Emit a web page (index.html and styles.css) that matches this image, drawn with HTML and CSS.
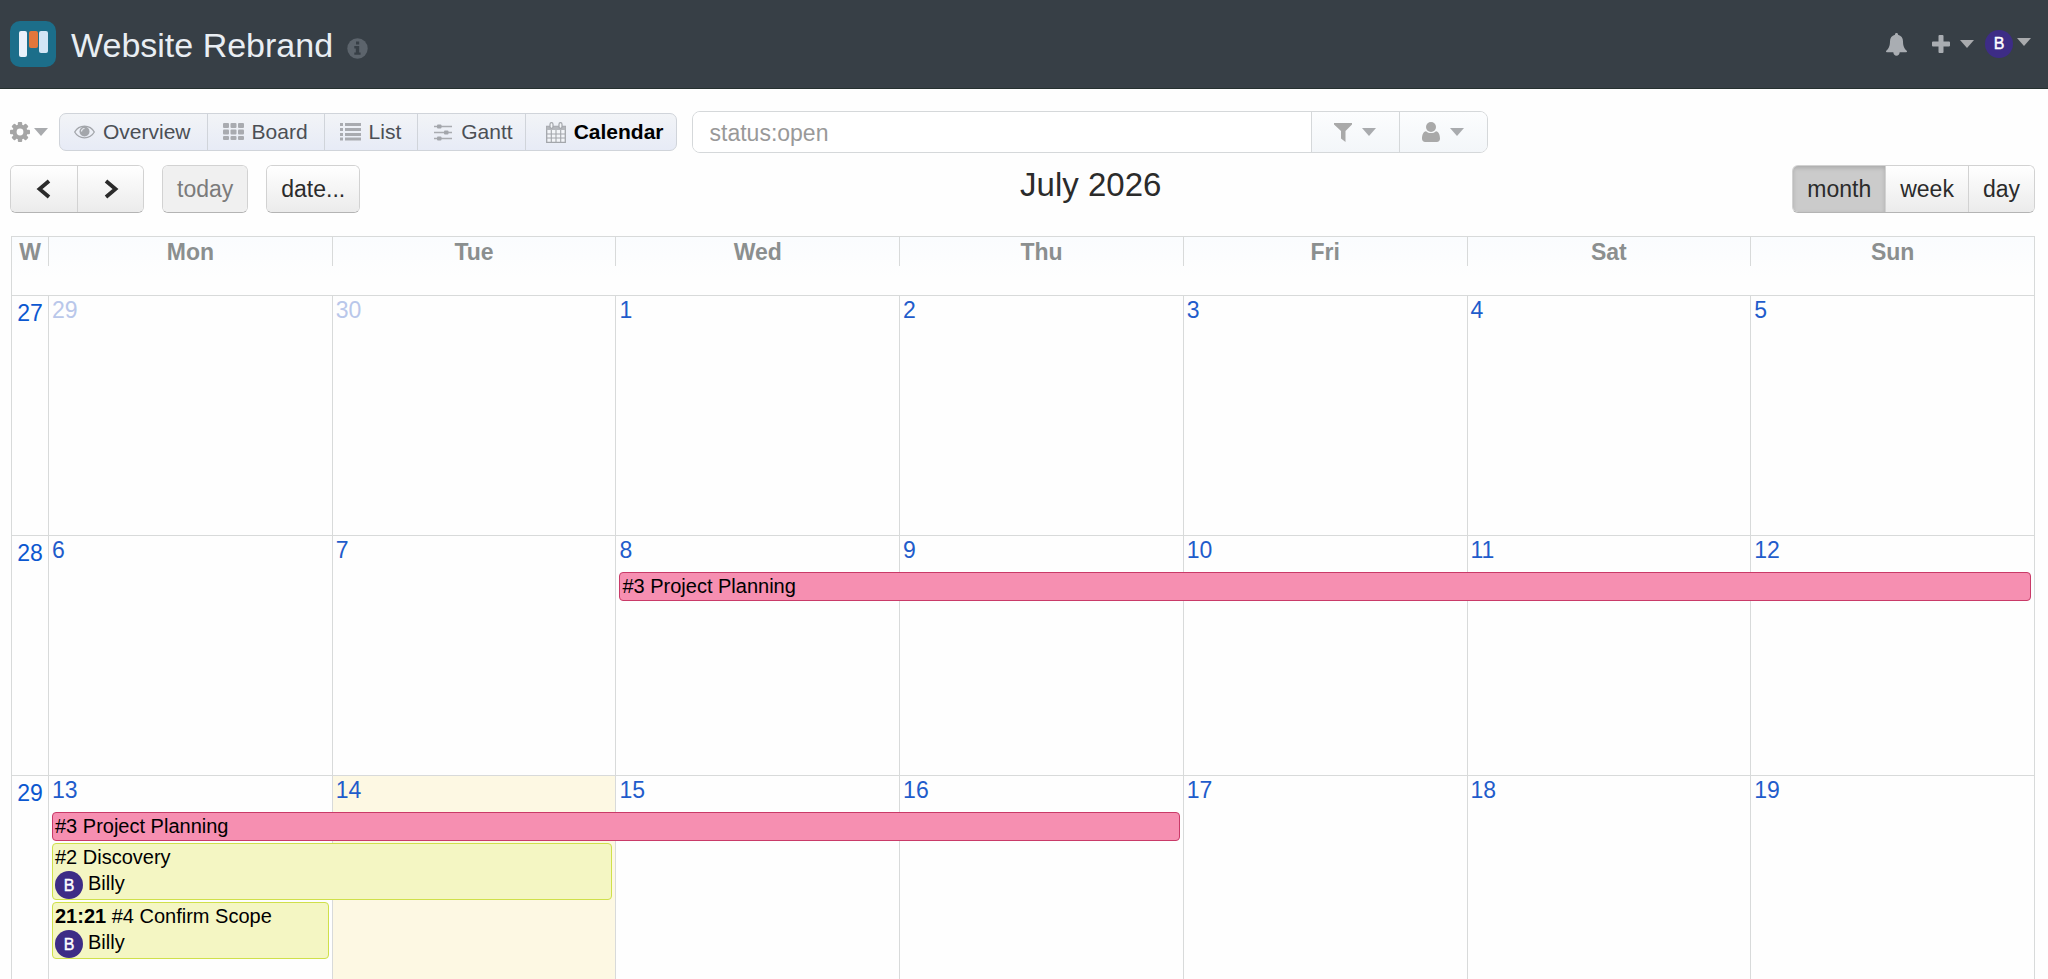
FILE: index.html
```html
<!DOCTYPE html>
<html lang="en">
<head>
<meta charset="utf-8">
<meta name="viewport" content="width=device-width, initial-scale=1">
<title>Website Rebrand - Calendar</title>
<link rel="stylesheet" href="styles.css">
</head>
<body>
<header class="topbar">
  <a class="logo" href="#" aria-label="Home">
    <svg width="46" height="46" viewBox="0 0 46 46" aria-hidden="true"><rect width="46" height="46" rx="10" fill="#1c6e8a"/><rect x="9" y="10" width="8" height="26" rx="2" fill="#e9f1fa"/><rect x="19" y="10" width="9" height="17" rx="2" fill="#e2763b"/><rect x="29" y="10" width="9" height="22" rx="2" fill="#d3e5f5"/></svg>
  </a>
  <h1 class="project">Website Rebrand</h1>
  <button class="plain info" aria-label="Project details">
    <svg width="21" height="21" viewBox="0 0 21 21" aria-hidden="true"><circle cx="10.500" cy="10.500" r="10.200" fill="#5c646c"/><path d="M9 3.500h3.200v3H9zM7.300 8h4.900v6.400h1.400v2.300H7.300v-2.300h1.500v-4H7.300z" fill="#373f46"/></svg>
  </button>
  <nav class="user-menu" aria-label="User">
    <button class="plain" aria-label="Notifications">
      <svg width="21" height="23" viewBox="0 0 21 23" aria-hidden="true"><path d="M10.500 0c.9 0 1.500.6 1.500 1.400v.4c3.200.8 5 3.300 5 6.400 0 5.300 1.600 7.500 3.700 9.500.6.600.3 1.500-.5 1.500h-6.500c-.2 2-1.400 3.500-3.200 3.500s-3-1.500-3.200-3.500H.8c-.8 0-1.100-.9-.5-1.500C2.400 15.700 4 13.500 4 8.200c0-3.100 1.800-5.600 5-6.400v-.4C9 .6 9.600 0 10.500 0z" fill="#a9adb2"/></svg>
    </button>
    <button class="plain add" aria-label="Add">
      <svg width="18" height="18" viewBox="0 0 18 18" aria-hidden="true"><path d="M6.500 1q0-1 1-1h3q1 0 1 1v5.500H17q1 0 1 1v3q0 1-1 1h-5.500V17q0 1-1 1h-3q-1 0-1-1v-5.500H1q-1 0-1-1v-3q0-1 1-1h5.500z" fill="#a9adb2"/></svg>
      <span class="caret"></span>
    </button>
    <button class="plain account" aria-label="Account">
      <span class="avatar">B</span>
      <span class="caret"></span>
    </button>
  </nav>
</header>

<main>
  <div class="views">
    <button class="plain settings" aria-label="Settings">
      <svg width="20" height="20" viewBox="0 0 20 20" aria-hidden="true"><g fill="#a6a6a6"><rect x="7.800" y="0" width="4.400" height="20" rx="1"/><rect x="7.800" y="0" width="4.400" height="20" rx="1" transform="rotate(45 10 10)"/><rect x="7.800" y="0" width="4.400" height="20" rx="1" transform="rotate(90 10 10)"/><rect x="7.800" y="0" width="4.400" height="20" rx="1" transform="rotate(135 10 10)"/><circle cx="10" cy="10" r="7.500"/></g><circle cx="10" cy="10" r="3.400" fill="#fefefe"/></svg>
      <span class="caret"></span>
    </button>
    <nav class="tabs" aria-label="Views">
      <a class="tab" href="#"><svg width="21" height="20" viewBox="0 0 21 20" aria-hidden="true"><path d="M.7 10C5 2.300 16 2.300 20.300 10 16 17.700 5 17.700.7 10z" fill="none" stroke="#a3a6ab" stroke-width="1.300"/><circle cx="10.500" cy="9.500" r="5" fill="#a3a6ab"/><path d="M7.500 9.500a3 3 0 0 1 3-3" fill="none" stroke="#eef1f6" stroke-width="1.200"/></svg>Overview</a>
      <a class="tab" href="#"><svg width="21" height="20" viewBox="0 0 21 20" aria-hidden="true"><g fill="#a9abb0"><rect x="0" y="1" width="6" height="5" rx="1"/><rect x="7.500" y="1" width="6" height="5" rx="1"/><rect x="15" y="1" width="6" height="5" rx="1"/><rect x="0" y="7.500" width="6" height="5" rx="1"/><rect x="7.500" y="7.500" width="6" height="5" rx="1"/><rect x="15" y="7.500" width="6" height="5" rx="1"/><rect x="0" y="14" width="6" height="4" rx="1"/><rect x="7.500" y="14" width="6" height="4" rx="1"/><rect x="15" y="14" width="6" height="4" rx="1"/></g></svg>Board</a>
      <a class="tab" href="#"><svg width="21" height="20" viewBox="0 0 21 20" aria-hidden="true"><path d="M0 2.500h3M5 2.500h16M0 7.500h3M5 7.500h16M0 12.500h3M5 12.500h16M0 17h3M5 17h16" stroke="#a9abb0" stroke-width="2.900" fill="none"/></svg>List</a>
      <a class="tab tab-tight" href="#"><svg width="20" height="20" viewBox="0 0 20 20" aria-hidden="true"><path d="M1 4.500h18M1 10.500h18M1 16.500h18" stroke="#a9abb0" stroke-width="1.500"/><g fill="#a3a6ab"><rect x="4" y="2.500" width="4.500" height="4" rx="1"/><rect x="11" y="8.500" width="4.500" height="4" rx="1"/><rect x="4" y="14.500" width="4.500" height="4" rx="1"/></g></svg>Gantt</a>
      <a class="tab tab-tight tab-current" href="#" aria-current="page"><svg width="20" height="21" viewBox="0 0 20 21" aria-hidden="true"><path d="M.7 4.500h18.600v15.800H.7z" fill="#f3f5f8" stroke="#a3a6ab" stroke-width="1.300"/><path d="M.7 4.500h18.600V8H.7z" fill="#b4b7bc"/><path d="M5.300 8v12M10 8v12M14.700 8v12M1 12h18M1 16h18" stroke="#a3a6ab" stroke-width="1.100"/><rect x="4" y=".7" width="3" height="5.600" rx="1.500" fill="#f3f5f8" stroke="#a3a6ab" stroke-width="1.200"/><rect x="13" y=".7" width="3" height="5.600" rx="1.500" fill="#f3f5f8" stroke="#a3a6ab" stroke-width="1.200"/></svg>Calendar</a>
    </nav>
    <form class="search">
      <input class="query" type="text" value="status:open" aria-label="Search tasks">
      <button class="filter" type="button" aria-label="Default filters">
        <svg width="18" height="19" viewBox="0 0 18 19" aria-hidden="true"><path d="M0 0h18v1.500L11.500 8v11l-4.500-3.500V8L0 1.500z" fill="#a9a9a9"/></svg>
        <span class="caret"></span>
      </button>
      <button class="filter" type="button" aria-label="User filters">
        <svg width="18" height="20" viewBox="0 0 18 20" aria-hidden="true"><circle cx="9" cy="5" r="5" fill="#a9a9a9"/><path d="M4 9.200C5.300 10.500 7 11 9 11s3.700-.5 5-1.800c2.700.4 4 3.600 4 7.300 0 2.200-1.300 3.500-3.200 3.500H3.200C1.300 20 0 18.700 0 16.500c0-3.700 1.300-6.900 4-7.300z" fill="#a9a9a9"/></svg>
        <span class="caret"></span>
      </button>
    </form>
  </div>

  <div class="toolbar">
    <div class="toolbar-left">
      <div class="group">
        <button class="btn arrow" aria-label="Previous"><svg width="16" height="20" viewBox="0 0 16 20" aria-hidden="true"><path d="M13 2 3.500 10l9.500 8" fill="none" stroke="#2b2b2b" stroke-width="3.800"/></svg></button>
        <button class="btn arrow" aria-label="Next"><svg width="16" height="20" viewBox="0 0 16 20" aria-hidden="true"><path d="M3 2 12.500 10 3 18" fill="none" stroke="#2b2b2b" stroke-width="3.800"/></svg></button>
      </div>
      <div class="group"><button class="btn btn-off" disabled>today</button></div>
      <div class="group"><button class="btn">date...</button></div>
    </div>
    <h2 class="period">July 2026</h2>
    <div class="group">
      <button class="btn btn-on" aria-pressed="true">month</button>
      <button class="btn">week</button>
      <button class="btn">day</button>
    </div>
  </div>

  <table class="calendar">
    <thead>
      <tr>
        <th class="week-col" scope="col"><div>W</div></th>
        <th scope="col"><div>Mon</div></th>
        <th scope="col"><div>Tue</div></th>
        <th scope="col"><div>Wed</div></th>
        <th scope="col"><div>Thu</div></th>
        <th scope="col"><div>Fri</div></th>
        <th scope="col"><div>Sat</div></th>
        <th scope="col"><div>Sun</div></th>
      </tr>
    </thead>
    <tbody>
      <tr>
        <th class="week" scope="row"><a href="#">27</a></th>
        <td><a class="date other" href="#">29</a></td>
        <td><a class="date other" href="#">30</a></td>
        <td><a class="date" href="#">1</a></td>
        <td><a class="date" href="#">2</a></td>
        <td><a class="date" href="#">3</a></td>
        <td><a class="date" href="#">4</a></td>
        <td><a class="date" href="#">5</a></td>
      </tr>
      <tr>
        <th class="week" scope="row"><a href="#">28</a></th>
        <td><a class="date" href="#">6</a></td>
        <td><a class="date" href="#">7</a></td>
        <td><a class="date" href="#">8</a><a class="event pink span-5" href="#">#3 Project Planning</a></td>
        <td><a class="date" href="#">9</a></td>
        <td><a class="date" href="#">10</a></td>
        <td><a class="date" href="#">11</a></td>
        <td><a class="date" href="#">12</a></td>
      </tr>
      <tr>
        <th class="week" scope="row"><a href="#">29</a></th>
        <td>
          <a class="date" href="#">13</a>
          <a class="event pink span-4" href="#">#3 Project Planning</a>
          <a class="event lime span-2" href="#">#2 Discovery<span class="assignee"><span class="avatar">B</span>Billy</span></a>
          <a class="event lime" href="#"><b>21:21</b> #4 Confirm Scope<span class="assignee"><span class="avatar">B</span>Billy</span></a>
        </td>
        <td class="today"><a class="date" href="#">14</a></td>
        <td><a class="date" href="#">15</a></td>
        <td><a class="date" href="#">16</a></td>
        <td><a class="date" href="#">17</a></td>
        <td><a class="date" href="#">18</a></td>
        <td><a class="date" href="#">19</a></td>
      </tr>
    </tbody>
  </table>
</main>
</body>
</html>
```
FILE: styles.css
```css
* {
  box-sizing: border-box;
}

body {
  margin: 0;
  height: 100vh;
  overflow: hidden;
  background: #fefefe;
  color: #2b2b2b;
  font-family: "Liberation Sans", Arial, sans-serif;
  font-size: 23px;
}

a {
  color: inherit;
  text-decoration: none;
}

button,
input {
  font: inherit;
  color: inherit;
}

svg {
  display: block;
  flex: none;
}

.plain {
  display: flex;
  align-items: center;
  padding: 0;
  border: 0;
  background: none;
}

.caret {
  width: 14px;
  height: 8px;
  background: #a9abae;
  clip-path: polygon(0 0, 100% 0, 50% 100%);
}

.avatar {
  display: flex;
  align-items: center;
  justify-content: center;
  width: 28px;
  height: 28px;
  border-radius: 50%;
  background: #3d2c86;
  color: #fff;
  font-size: 16px;
  -webkit-text-stroke: 0.4px #fff;
}

/* Top bar */
.topbar {
  display: flex;
  align-items: center;
  height: 89px;
  padding: 0 17px 0 10px;
  border-bottom: 1px solid #25302f;
  background: #373f46;
}

.project {
  margin: 2px 0 0 15px;
  color: #e9eef3;
  font-size: 34px;
  font-weight: normal;
  line-height: 40px;
}

.info {
  margin: 8px 0 0 14px;
}

.user-menu {
  display: flex;
  align-items: center;
  margin-left: auto;
}

.add {
  gap: 10px;
  margin: 0 11px 0 25px;
}

.account {
  gap: 4px;
}

.account .caret {
  margin-bottom: 4px;
}

/* View switcher and search */
.views {
  display: flex;
  align-items: center;
  padding: 22px 10px 0;
}

.settings {
  gap: 4px;
}

.tabs {
  display: flex;
  height: 38px;
  margin: 0 15px 0 11px;
  border: 1px solid #d0d4da;
  border-radius: 7px;
  background: linear-gradient(#f2f4f7, #e7ebf6);
  color: #4b4f55;
  font-size: 21px;
}

.tab {
  display: flex;
  align-items: center;
  gap: 8px;
  padding: 0 16px 0 15px;
}

.tab:first-child {
  padding-left: 14px;
}

.tab + .tab {
  border-left: 1px solid #d0d4da;
}

.tab-tight {
  padding-right: 12px;
}

.tab-current {
  padding-left: 20px;
  color: #000;
  font-weight: bold;
}

.search {
  display: flex;
  flex: 0 1 796px;
  height: 42px;
  border: 1px solid #d5d8da;
  border-radius: 8px;
  overflow: hidden;
}

.query {
  flex: 1;
  min-width: 0;
  padding: 2px 17px 0;
  border: 0;
  background: #fff;
  color: #999;
}

.filter {
  display: flex;
  align-items: center;
  justify-content: center;
  gap: 10px;
  width: 88px;
  padding: 0;
  border: 0;
  border-left: 1px solid #d5d8da;
  background: linear-gradient(#fcfdfe, #f3f6f9);
}

/* Calendar toolbar */
.toolbar {
  display: flex;
  align-items: flex-start;
  justify-content: space-between;
  padding: 12px 13px 0 10px;
}

.toolbar-left {
  display: flex;
  gap: 18px;
  margin-right: 29px;
}

.group {
  display: flex;
  border: 1px solid #d2d2d2;
  border-bottom-color: #b4b4b4;
  border-radius: 6px;
  overflow: hidden;
}

.btn {
  height: 46px;
  padding: 0 14px;
  border: 0;
  background: linear-gradient(#fff, #ebebeb);
}

.btn + .btn {
  border-left: 1px solid #d2d2d2;
}

.arrow {
  display: flex;
  align-items: center;
  justify-content: center;
  width: 66px;
}

.btn-off {
  background: #f0f0f0;
  color: #7b7b7b;
}

.btn-on {
  background: #cbcbcb;
  box-shadow: inset 0 2px 4px #aaa;
}

.period {
  margin: 0;
  font-size: 33px;
  font-weight: normal;
  line-height: 40px;
}

/* Month grid */
.calendar {
  width: calc(100% - 24px);
  margin: 23px 13px 0 11px;
  border: 1px solid #d8dada;
  border-top: 0;
  border-spacing: 0;
  table-layout: fixed;
}

.calendar th,
.calendar td {
  padding: 0;
  border-top: 1px solid #d8dada;
  vertical-align: top;
}

.calendar thead th {
  height: 59px;
  background: linear-gradient(#fafcfe, #fefefe 70%);
  color: #8b8f8f;
}

.calendar thead div {
  height: 29px;
  line-height: 30px;
}

.calendar thead th + th div {
  border-left: 1px solid #d8dada;
}

.calendar .week-col {
  width: 36px;
}

.calendar tbody tr {
  height: 240px;
}

.calendar .week {
  padding-top: 3px;
  color: #0b57d0;
  font-weight: normal;
  line-height: 28px;
}

.calendar td {
  padding: 0 3px;
  border-left: 1px solid #d8dada;
}

.calendar .today {
  background: #fdf8e3;
}

.date {
  display: block;
  margin-bottom: 8px;
  color: #1f5ccb;
  line-height: 28px;
}

.other {
  color: #b9c7ea;
}

/* A cell plus its side padding and border is 7px wider than its content. */
.event {
  display: block;
  position: relative;
  z-index: 1;
  width: calc(var(--days, 1) * (100% + 7px) - 7px);
  margin-bottom: 2px;
  padding: 0 2px;
  border: 1px solid;
  border-radius: 4px;
  color: #000;
  font-size: 20px;
  line-height: 27px;
  white-space: nowrap;
}

.span-2 {
  --days: 2;
}

.span-4 {
  --days: 4;
}

.span-5 {
  --days: 5;
}

.pink {
  border-color: #c93a68;
  background: #f68fb1;
}

.lime {
  border-color: #cfe04a;
  background: #f4f6c3;
}

.assignee {
  display: flex;
  gap: 5px;
  line-height: 25px;
}
```
